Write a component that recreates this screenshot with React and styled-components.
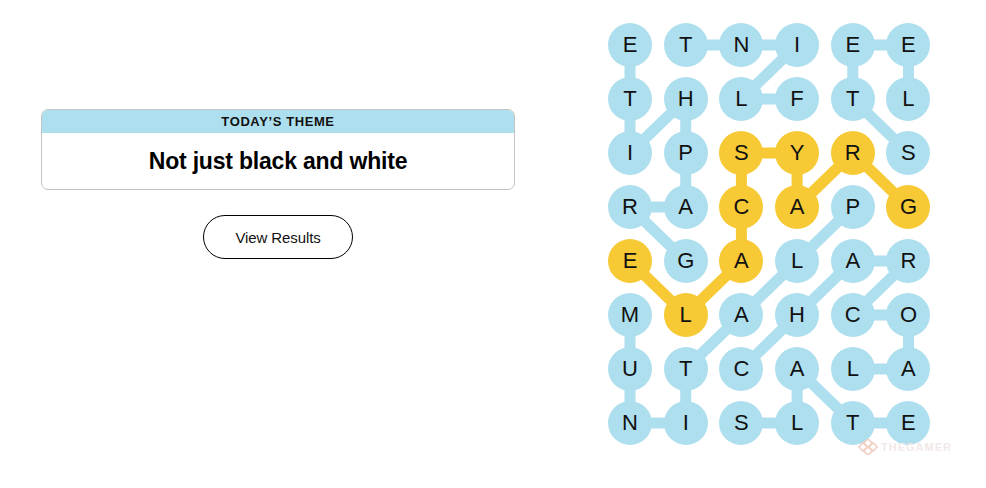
import React from 'react';
import styled, { createGlobalStyle } from 'styled-components';

const GlobalStyle = createGlobalStyle`
  html, body {
    margin: 0;
    background: #fff;
    font-family: "Liberation Sans", Arial, sans-serif;
    color: #000;
  }
`;

const COL_STEP = 55.7;
const ROW_STEP = 54;
const SIZE = 44;

const letters = [
  'ETNIEE',
  'THLFTL',
  'IPSYRS',
  'RACAPG',
  'EGALAR',
  'MLAHCO',
  'UTCALA',
  'NISLTE',
];

// each word as a path of [row, col]
const words = [
  { path: [[1, 3], [1, 2], [0, 3], [0, 2], [0, 1]] }, // flint
  { path: [[2, 5], [1, 4], [0, 4], [0, 5], [1, 5]] }, // steel
  { path: [[4, 1], [3, 0], [3, 1], [2, 1], [1, 1], [2, 0], [1, 0], [0, 0]] }, // graphite
  { path: [[3, 4], [4, 3], [5, 2], [6, 1], [7, 1], [7, 0], [6, 0], [5, 0]] }, // platinum
  { path: [[6, 2], [5, 3], [4, 4], [4, 5], [5, 4], [5, 5], [6, 5], [6, 4]] }, // charcoal
  { path: [[7, 2], [7, 3], [6, 3], [7, 4], [7, 5]] }, // slate
  { path: [[3, 5], [2, 4], [3, 3], [2, 3], [2, 2], [3, 2], [4, 2], [5, 1], [4, 0]], spangram: true }, // grayscale
];

const spanCells = new Set(words.find(w => w.spangram).path.map(([r, c]) => `${r}-${c}`));

const center = (r, c) => [SIZE / 2 + c * COL_STEP, SIZE / 2 + r * ROW_STEP];

const Page = styled.div`
  display: flex;
  align-items: flex-start;
  gap: 93px;
  padding: 23px 0 0 41px;
  height: 488px;
  box-sizing: border-box;
  position: relative;
`;

const Side = styled.div`
  width: 474px;
  padding-top: 86px;
  display: flex;
  flex-direction: column;
  align-items: center;
  gap: 25px;
`;

const ThemeCard = styled.div`
  width: 100%;
  border: 1px solid #c4c4c4;
  border-radius: 7px;
  overflow: hidden;
  box-sizing: border-box;
`;

const ThemeHeader = styled.div`
  background: #aedfee;
  height: 23px;
  display: flex;
  align-items: center;
  justify-content: center;
  font-size: 13px;
  font-weight: 700;
  letter-spacing: 0.6px;
  color: #121212;
`;

const ThemeBody = styled.div`
  height: 56px;
  display: flex;
  align-items: center;
  justify-content: center;
  font-size: 23px;
  font-weight: 700;
  letter-spacing: -0.2px;
`;

const ResultsButton = styled.button`
  width: 150px;
  height: 44px;
  border: 1px solid #000;
  border-radius: 22px;
  background: #fff;
  font-family: "Liberation Sans", Arial, sans-serif;
  font-size: 15px;
  color: #121212;
  letter-spacing: -0.1px;
`;

const Board = styled.div`
  position: relative;
  display: grid;
  grid-template-columns: repeat(6, ${SIZE}px);
  grid-auto-rows: ${SIZE}px;
  column-gap: ${COL_STEP - SIZE}px;
  row-gap: ${ROW_STEP - SIZE}px;
`;

const Links = styled.svg`
  position: absolute;
  inset: 0;
  width: 100%;
  height: 100%;
  overflow: visible;
`;

const Cell = styled.div`
  position: relative;
  width: ${SIZE}px;
  height: ${SIZE}px;
  border-radius: 50%;
  background: ${p => (p.$span ? '#f7c934' : '#aedfee')};
  display: flex;
  align-items: center;
  justify-content: center;
  font-size: 22px;
  color: #111;
`;

const Watermark = styled.div`
  position: absolute;
  left: 858px;
  top: 439px;
  display: flex;
  align-items: center;
  gap: 3px;
  font-size: 11px;
  font-weight: 700;
  letter-spacing: 1px;
  color: #f1e9e9;
`;

export default function App() {
  return (
    <>
      <GlobalStyle />
      <Page>
        <Side>
          <ThemeCard>
            <ThemeHeader>TODAY’S THEME</ThemeHeader>
            <ThemeBody>Not just black and white</ThemeBody>
          </ThemeCard>
          <ResultsButton>View Results</ResultsButton>
        </Side>
        <Board>
          <Links>
            {words.map((w, i) => (
              <polyline
                key={i}
                points={w.path.map(([r, c]) => center(r, c).join(',')).join(' ')}
                fill="none"
                stroke={w.spangram ? '#f7c934' : '#aedfee'}
                strokeWidth="11"
                strokeLinejoin="round"
              />
            ))}
          </Links>
          {letters.map((row, r) =>
            row.split('').map((ch, c) => (
              <Cell key={`${r}-${c}`} $span={spanCells.has(`${r}-${c}`)}>{ch}</Cell>
            ))
          )}
        </Board>
        <Watermark>
          <svg width="20" height="16" viewBox="0 0 20 16">
            <g fill="none" stroke="#f2cfc2" strokeWidth="1.6">
              <rect x="7" y="1" width="6" height="6" transform="rotate(45 10 4)" />
              <rect x="2" y="5" width="6" height="6" transform="rotate(45 5 8)" />
              <rect x="12" y="5" width="6" height="6" transform="rotate(45 15 8)" />
              <rect x="7" y="9" width="6" height="6" transform="rotate(45 10 12)" />
            </g>
          </svg>
          THEGAMER
        </Watermark>
      </Page>
    </>
  );
}
